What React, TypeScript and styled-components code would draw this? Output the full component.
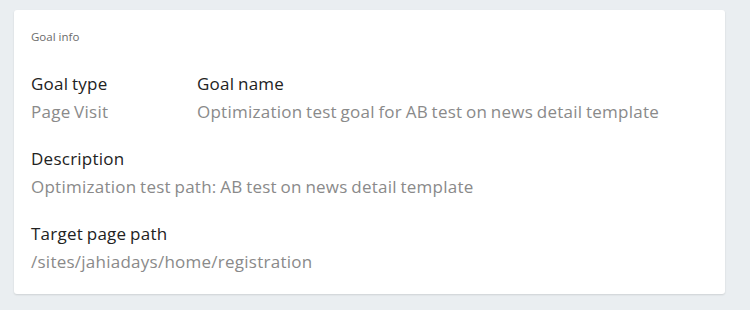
import React from "react";
import styled, { createGlobalStyle } from "styled-components";

const GlobalStyle = createGlobalStyle`
  html, body {
    margin: 0;
    padding: 0;
    background: #eaeef1;
    font-family: "Open Sans", Lato, Arial, sans-serif;
  }
`;

const Page = styled.div`
  padding: 10px 25px 16px 14px;
`;

const Card = styled.section`
  background: #fff;
  border-radius: 3px;
  box-shadow: 0 1px 2px rgba(0, 0, 0, 0.12);
  padding: 20px 17px 21px 17px;
  display: flex;
  flex-direction: column;
  gap: 25px;
`;

const CardTitle = styled.h2`
  margin: 0 0 4px;
  font-size: 11.5px;
  font-weight: 400;
  line-height: 14px;
  color: #6b6b6b;
`;

const Row = styled.div`
  display: flex;
`;

const Field = styled.div<{ $width?: number }>`
  width: ${(p) => (p.$width ? `${p.$width}px` : "auto")};
  flex: ${(p) => (p.$width ? "none" : "1")};
`;

const Label = styled.div`
  font-size: 17px;
  line-height: 22px;
  letter-spacing: 0.25px;
  word-spacing: -1px;
  color: #222;
`;

const Value = styled(Label)`
  margin-top: 6px;
  color: #8a8a8a;
`;

export default function App() {
  return (
    <Page>
      <GlobalStyle />
      <Card>
        <CardTitle>Goal info</CardTitle>
        <Row>
          <Field $width={166}>
            <Label>Goal type</Label>
            <Value>Page Visit</Value>
          </Field>
          <Field>
            <Label>Goal name</Label>
            <Value>Optimization test goal for AB test on news detail template</Value>
          </Field>
        </Row>
        <Row>
          <Field>
            <Label>Description</Label>
            <Value>Optimization test path: AB test on news detail template</Value>
          </Field>
        </Row>
        <Row>
          <Field>
            <Label>Target page path</Label>
            <Value>/sites/jahiadays/home/registration</Value>
          </Field>
        </Row>
      </Card>
    </Page>
  );
}
